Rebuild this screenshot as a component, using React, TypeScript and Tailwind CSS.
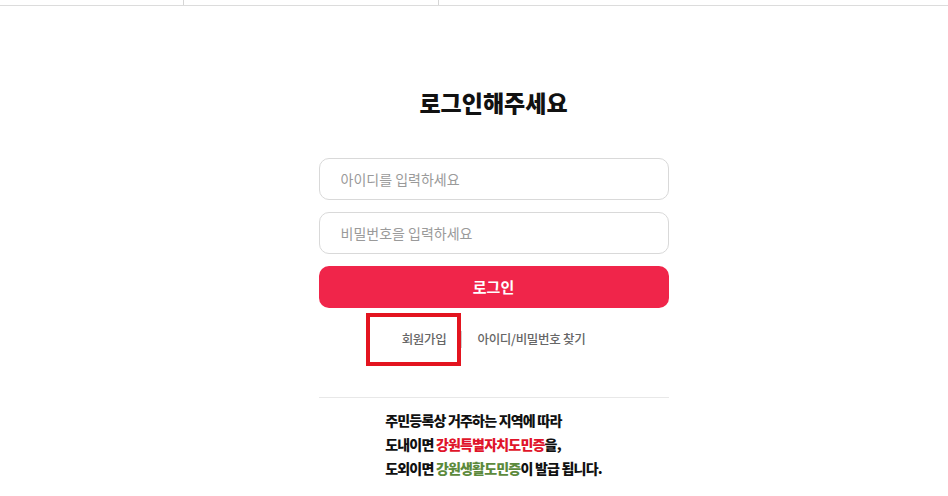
export default function App() {
  return (
    <div
      className="min-h-[496px] bg-white text-[#111]"
      style={{ fontFamily: '"Noto Sans CJK KR", "Noto Sans", sans-serif' }}
    >
      {/* top nav strip */}
      <div className="flex h-[6px] border-b border-[#dcdcdc]">
        <div className="w-[184px] border-r border-[#d6d6d6]" />
        <div className="w-[255px] border-r border-[#d6d6d6]" />
        <div className="flex-1" />
      </div>

      <div className="flex justify-center pl-[39px]">
        <div className="w-[350px] pt-[80px]">
          <h1 className="text-center text-[23px] font-extrabold leading-8 text-[#111]">
            로그인해주세요
          </h1>

          <form className="mt-10 flex flex-col gap-3" onSubmit={(e) => e.preventDefault()}>
            <input
              type="text"
              placeholder="아이디를 입력하세요"
              className="h-[42px] w-full rounded-[10px] border border-[#d9d9d9] bg-white px-[21px] text-[14px] outline-none placeholder:text-[#9a9a9a]"
            />
            <input
              type="password"
              placeholder="비밀번호을 입력하세요"
              className="h-[42px] w-full rounded-[10px] border border-[#d9d9d9] bg-white px-[21px] text-[14px] outline-none placeholder:text-[#9a9a9a]"
            />
            <button
              type="submit"
              className="h-[42px] w-full rounded-[10px] bg-[#f0254a] text-[15px] font-bold text-white"
            >
              로그인
            </button>
          </form>

          <div className="relative flex items-center justify-center pt-[22px] pb-[49px] text-[12.5px] font-medium leading-[18px] text-[#666]">
            <a href="#" className="tracking-[-0.3px]">회원가입</a>
            <span className="mx-[15px] h-[17px] w-px bg-[#cfcfcf]" />
            <a href="#" className="tracking-[-0.3px]">아이디/비밀번호 찾기</a>
            <div className="absolute left-[47px] top-[5px] h-[53px] w-[95px] border-4 border-[#e3141f]" />
          </div>

          <div className="border-t border-[#e8e8e8] pt-[10px] text-center">
            <p className="inline-block text-left text-[14px] font-black leading-6 tracking-[-0.8px] text-[#111]">
              주민등록상 거주하는 지역에 따라
              <br />
              도내이면 <span className="text-[#e0142a]">강원특별자치도민증</span>을,
              <br />
              도외이면 <span className="text-[#5c8a3c]">강원생활도민증</span>이 발급 됩니다.
            </p>
          </div>
        </div>
      </div>
    </div>
  );
}
